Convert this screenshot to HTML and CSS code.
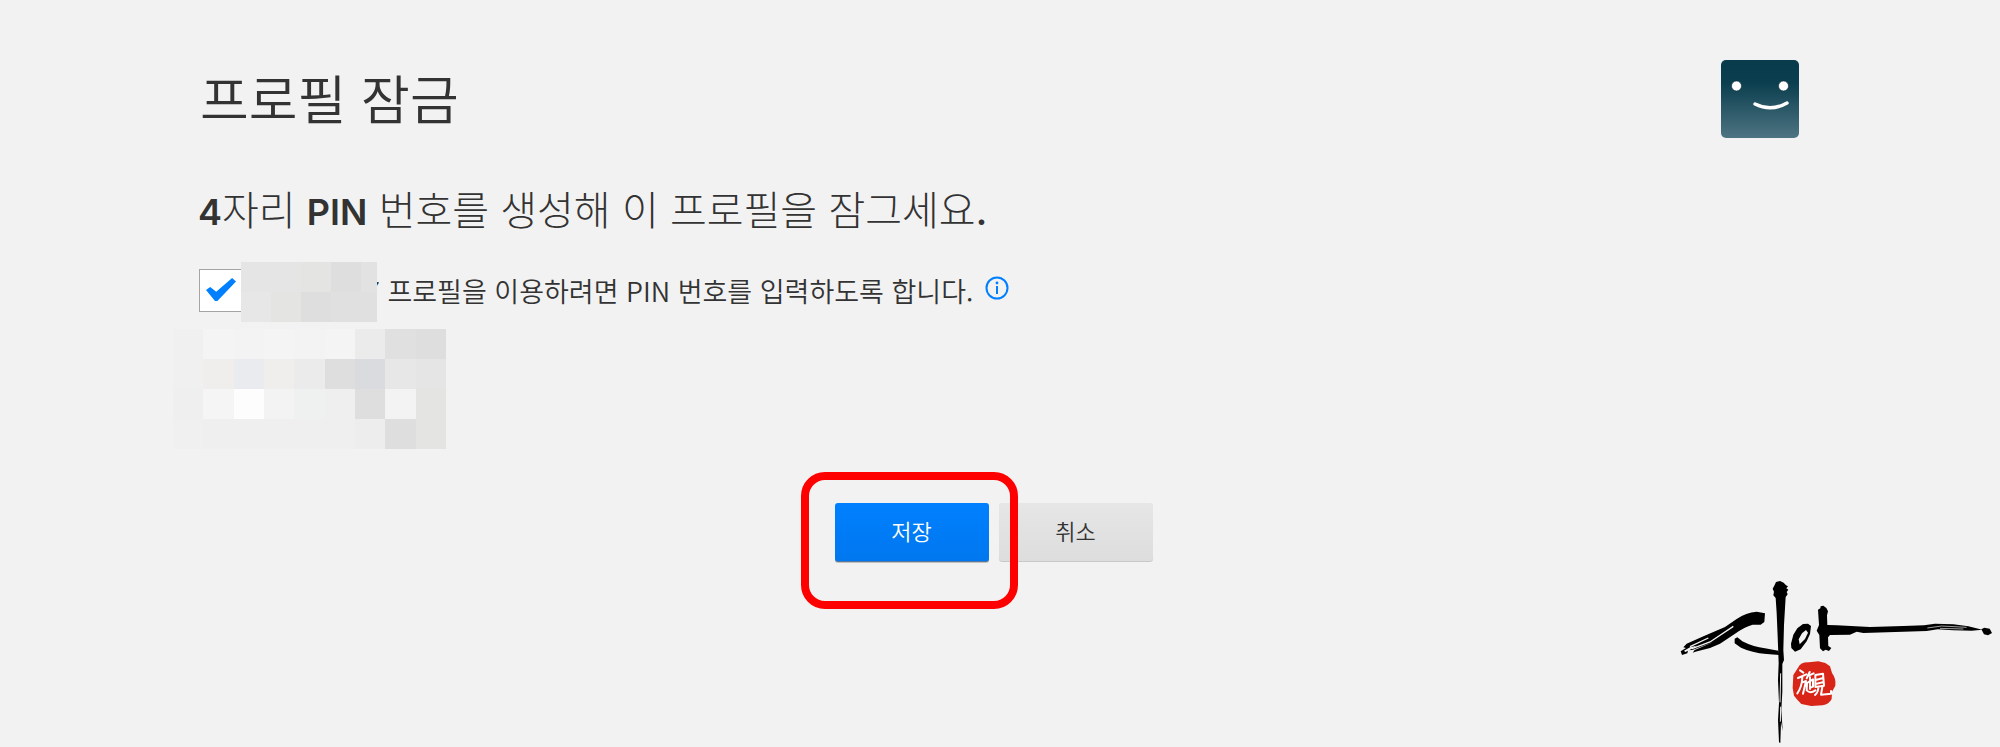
FILE: index.html
```
<!DOCTYPE html>
<html lang="ko">
<head>
    <meta charset="UTF-8">
    <meta name="viewport" content="width=device-width, initial-scale=1.0">
    <title>프로필 잠금</title>
    <link rel="stylesheet" href="styles.css">
</head>
<body>
    <main class="page">
        <header class="page-header">
            <h1>프로필 잠금</h1>
            <svg class="avatar" viewBox="0 0 78 78" role="img" aria-label="프로필">
                <defs>
                    <linearGradient id="avatarFill" x1="0" y1="0" x2="0" y2="1">
                        <stop offset="0" stop-color="#083b4b"/>
                        <stop offset="0.3" stop-color="#0b3f4f"/>
                        <stop offset="1" stop-color="#4e7482"/>
                    </linearGradient>
                </defs>
                <rect width="78" height="78" rx="5" fill="url(#avatarFill)"/>
                <circle cx="15.500" cy="26" r="5" fill="#fff" stroke="#062b39" stroke-width="0.600"/>
                <circle cx="62.500" cy="26" r="5" fill="#fff" stroke="#062b39" stroke-width="0.600"/>
                <path d="M34 44Q50 52 66 43" fill="none" stroke="#fff" stroke-width="3.400" stroke-linecap="round"/>
            </svg>
        </header>

        <form class="lock-form" action="#" method="post">
            <h2><b>4</b>자리 <b>PIN</b> 번호를 생성해 이 프로필을 잠그세요<b>.</b></h2>

            <div class="lock-row">
                <input type="checkbox" id="lock" name="lock" checked>
                <label for="lock">7 프로필을 이용하려면 PIN 번호를 입력하도록 합니다.</label>
                <svg class="info" viewBox="0 0 24 24" aria-hidden="true">
                    <circle cx="12" cy="12" r="10.500" fill="none" stroke="#0080ff" stroke-width="2"/>
                    <path d="M12 10v8" stroke="#0080ff" stroke-width="2"/>
                    <circle cx="12" cy="7" r="1.400" fill="#0080ff"/>
                </svg>
                <div class="mosaic mosaic-name">
                    <i class="e5"></i><i class="e5"></i><i class="e3"></i><i class="dd"></i><i class="e1"></i>
                    <i class="e6"></i><i class="e3"></i><i class="dd"></i><i class="df"></i><i class="df"></i>
                </div>
            </div>

            <div class="mosaic mosaic-pin">
                <i class="f0"></i><i class="f3"></i><i class="f2"></i><i class="f3"></i><i class="f2"></i><i class="f3"></i><i class="ea"></i><i class="df"></i><i class="dd"></i>
                <i class="f0"></i><i class="warm"></i><i class="cool"></i><i class="warm"></i><i class="ea"></i><i class="dd"></i><i class="blue"></i><i class="e6"></i><i class="e5"></i>
                <i class="ef"></i><i class="f4"></i><i class="fd"></i><i class="f2"></i><i class="mint"></i><i class="ef"></i><i class="dd"></i><i class="f2"></i><i class="e3"></i>
                <i class="f0"></i><i class="ef"></i><i class="ef"></i><i class="ef"></i><i class="ef"></i><i class="ef"></i><i class="ed"></i><i class="dd"></i><i class="e3"></i>
            </div>

            <div class="actions">
                <div class="highlight">
                    <button type="submit" class="btn btn-save">저장</button>
                </div>
                <button type="button" class="btn btn-cancel">취소</button>
            </div>
        </form>
    </main>

    <svg class="signature" viewBox="0 0 1020 531" aria-hidden="true">
        <!-- brush strokes -->
        <path d="M315 130L290 125Q258 127 230 147L195 171L132 198L80 221L70 232L78 234L62 244L66 255L82 250L84 242L76 246L72 242L90 232L110 227L88 241L99 239L160 216L104 240L98 248L106 245L150 234L180 221L224 192Q252 171 278 164L302 164L313 156Z"/>
        <path d="M90 230L145 204M96 236L150 216L220 169" fill="none" stroke="#f2f2f2" stroke-width="4"/>
        <path d="M224 206L232 202L247 214Q280 231 315 235L355 242L358 255L320 252Q275 248 243 233L224 220Z"/>
        <path d="M344 45L348 36L360 33L371 38L378 46L384 49L379 55L385 59L380 66L383 73L377 81L372 165L370 240L372 270L367 282L367 365L364 420L368 483L363 455L361 519L357 517L354 450L357 400L354 330L356 280L353 200L350 130L347 84L340 76L342 65L338 56Z"/>
        <path d="M362 310L360 397M362 410L361 455" fill="none" stroke="#f2f2f2" stroke-width="3"/>
        <path fill-rule="evenodd" d="M400 194L412 175L429 162L444 161L453 168L450 192L440 214L422 238L405 245L394 234L393 221ZM419 223L435 207L444 188L438 180L426 190L416 208Z"/>
        <path d="M474 119L481 115L482 109L490 107L499 114L504 124L501 136L502 165L530 166L630 171L730 168L792 166L825 161L880 163L925 169L967 179L935 182L880 181L833 178L800 183L730 185L610 189L590 185L570 194L510 195L504 202L505 228L514 234L507 243L497 239L489 244L480 235L478 195L470 182L477 165Z"/>
        <path d="M802 174L845 168L920 172M840 175L910 177" fill="none" stroke="#f2f2f2" stroke-width="2"/>
        <path d="M964 178L973 173L989 176L996 189L984 196L972 193Z"/>
        <!-- red seal -->
        <path fill="#d82518" d="M414 293Q422 276 446 277L475 274L496 279L510 289L516 309Q529 327 526 347L516 365L515 387Q507 403 488 406L454 408L424 402Q412 390 402 377L398 354L400 315Z"/>
        <g fill="none" stroke="#fff" stroke-width="6" stroke-linecap="round" stroke-linejoin="round">
            <path d="M420 301L430 308M414 324L439 313M427 321Q426 351 412 370M427 337L438 333L429 371M449 306L440 325M446 317L461 310M441 339L459 328V350L451 353M450 322V357M441 339L440 361Q451 372 466 361"/>
            <path d="M466 315V351L492 347L489 311ZM470 329L487 325M470 341L488 337M475 354Q474 368 465 375M487 351L483 374L513 371V363"/>
        </g>
    </svg>
</body>
</html>
```
FILE: styles.css
```
* {
    box-sizing: border-box;
}

body {
    font-family: "Noto Sans CJK KR", sans-serif;
    background-color: #f2f2f2;
    color: #333;
    margin: 0;
    min-height: 100vh;
    position: relative;
}

.page {
    width: 80%;
    margin: 0 auto;
    padding: 60px 1px 0 0;
}

.page-header {
    display: flex;
    justify-content: space-between;
    align-items: flex-start;
}

h1 {
    margin: 0;
    font-size: 53px;
    font-weight: 350;
    line-height: 74px;
}

.avatar {
    width: 78px;
    height: 78px;
}

h2 {
    margin: 49px 0 0 -2px;
    font-family: Inter, "Noto Sans CJK KR", sans-serif;
    font-size: 40px;
    font-weight: 300;
    line-height: 48px;
}

h2 b {
    font-size: 36px;
    font-weight: 600;
}

.lock-row {
    position: relative;
    display: flex;
    align-items: center;
    margin: 33px 0 0 -1px;
}

.lock-row input {
    appearance: none;
    width: 43px;
    height: 43px;
    margin: 0;
    background-color: #fff;
    border: 1px solid #a4a4a4;
}

.lock-row input:checked::before {
    content: "";
    display: block;
    width: 30px;
    height: 23px;
    margin: 8px 6px;
    background-color: #0080ff;
    clip-path: polygon(0 52%, 14% 39%, 34% 60%, 87% 0, 100% 15%, 38% 100%, 30% 100%);
}

.lock-row label {
    margin-left: 123px;
    font-size: 27px;
    font-weight: 350;
    line-height: 43px;
}

.info {
    width: 24px;
    height: 24px;
    margin: 0 0 6px 12px;
}

/* blurred out personal data */
.mosaic {
    display: grid;
}

.mosaic-name {
    position: absolute;
    left: 42px;
    top: -7px;
    grid-template-columns: repeat(4, 30px) 16px;
    grid-auto-rows: 30px;
}

.mosaic-pin {
    width: 273px;
    margin: 17px 0 0 -27px;
    grid-template-columns: repeat(9, 1fr);
    grid-auto-rows: 30px;
}

.dd { background-color: #dedede; }
.df { background-color: #e0e0e0; }
.e1 { background-color: #e2e2e2; }
.e3 { background-color: #e4e4e3; }
.e5 { background-color: #e5e5e5; }
.e6 { background-color: #e7e7e7; }
.ea { background-color: #ebebeb; }
.ed { background-color: #ededed; }
.ef { background-color: #efefef; }
.f0 { background-color: #f0f0f0; }
.f2 { background-color: #f3f3f3; }
.f3 { background-color: #f4f4f4; }
.f4 { background-color: #f5f5f5; }
.fd { background-color: #fdfdfd; }
.warm { background-color: #efeeec; }
.cool { background-color: #eaebee; }
.blue { background-color: #dadbde; }
.mint { background-color: #eef1f0; }

.actions {
    display: flex;
    justify-content: center;
    gap: 10px;
    margin-top: 54px;
    padding-right: 12px;
}

.btn {
    width: 154px;
    height: 59px;
    padding: 0 0 6px;
    border: 0;
    border-radius: 3px;
    font-family: inherit;
    font-size: 22px;
    font-weight: 350;
    cursor: pointer;
}

.btn-save {
    color: #fff;
    background-image: linear-gradient(#0080ff, #0077ee);
    box-shadow: inset 0 -1px 0 #55779b, 0 1px 0 rgba(0, 0, 0, 0.2);
}

.btn-cancel {
    color: #333;
    background-image: linear-gradient(#e6e6e6, #ddd);
    box-shadow: inset 0 -1px 0 #c8c8c8;
}

.highlight {
    position: relative;
}

.highlight::after {
    content: "";
    position: absolute;
    top: -31px;
    right: -29px;
    bottom: -47px;
    left: -34px;
    border: 8px solid #f00;
    border-radius: 24px;
    pointer-events: none;
    z-index: 1;
}

.signature {
    position: absolute;
    right: 0;
    bottom: 0;
    width: 340px;
    height: 177px;
}
```
